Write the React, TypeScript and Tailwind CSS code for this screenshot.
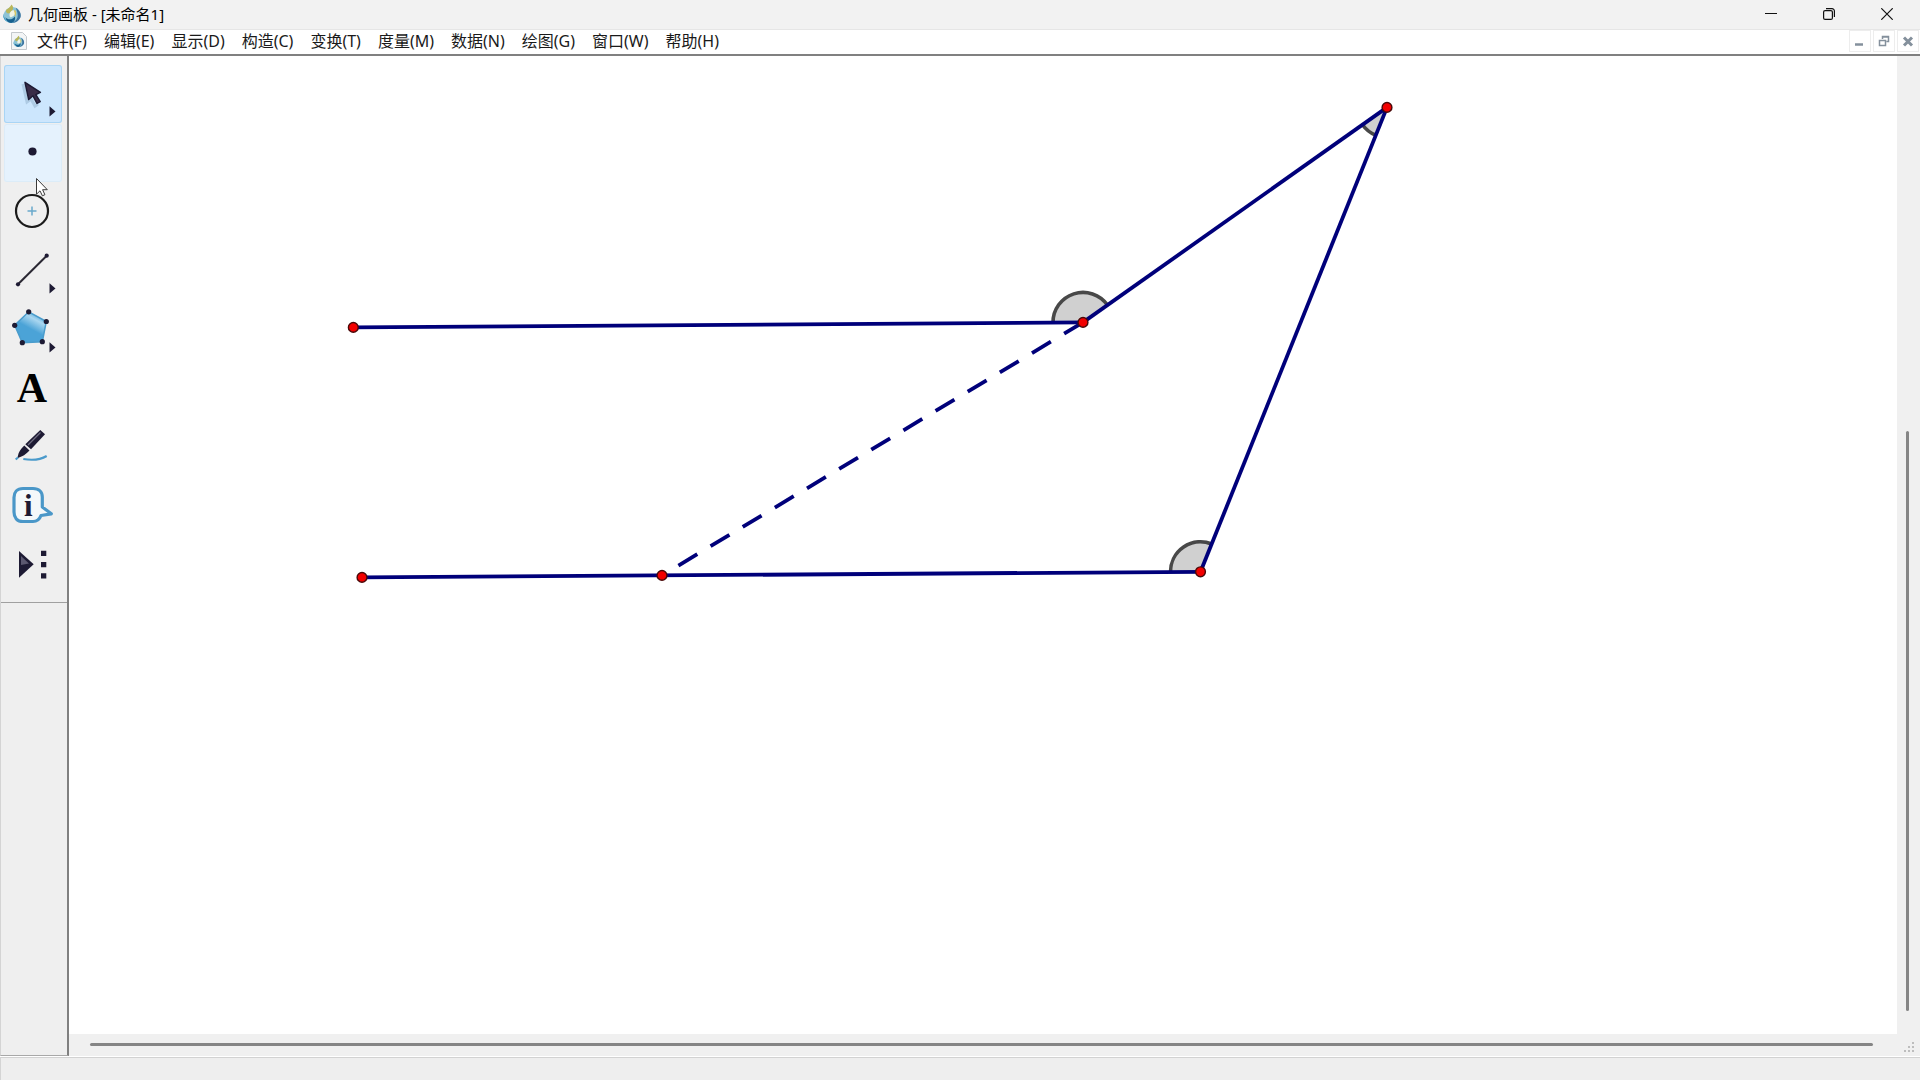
import type { ReactNode } from "react";
import clsx from "clsx";

type Point = { x: number; y: number };

type Tool = {
  name: string;
  icon: ReactNode;
  state?: "selected" | "hover";
  flyout?: boolean;
};

const menus = [
  "文件(F)",
  "编辑(E)",
  "显示(D)",
  "构造(C)",
  "变换(T)",
  "度量(M)",
  "数据(N)",
  "绘图(G)",
  "窗口(W)",
  "帮助(H)",
];

const INK = "#1d1a33";
const NAVY = "#00007a";

// Sketch points, in canvas coordinates
const A: Point = { x: 284.3, y: 271.4 };
const B: Point = { x: 1014, y: 266.4 };
const C: Point = { x: 1318, y: 51.4 };
const D: Point = { x: 1131.5, y: 515.8 };
const E: Point = { x: 293, y: 521.4 };
const F: Point = { x: 593, y: 519.4 };

const segments: [Point, Point][] = [
  [A, B],
  [B, C],
  [C, D],
  [D, E],
];

const angles: { at: Point; from: Point; to: Point }[] = [
  { at: B, from: A, to: C },
  { at: D, from: E, to: C },
  { at: C, from: D, to: B },
];

function towards(from: Point, to: Point, dist: number): Point {
  const len = Math.hypot(to.x - from.x, to.y - from.y);
  return {
    x: from.x + ((to.x - from.x) / len) * dist,
    y: from.y + ((to.y - from.y) / len) * dist,
  };
}

function AngleMark({ at, from, to }: { at: Point; from: Point; to: Point }) {
  const s = towards(at, from, 30);
  const e = towards(at, to, 30);
  const arc = `M${s.x} ${s.y}A30 30 0 0 1 ${e.x} ${e.y}`;
  return (
    <>
      <path d={`${arc}L${at.x} ${at.y}Z`} fill="#d0d0d0" />
      <path d={arc} fill="none" stroke="#484848" strokeWidth="3.6" />
    </>
  );
}

function Drop() {
  return (
    <>
      <path d="M10 3C5 4 1 8 1 13c1 4 4 7 9 7 5 0 9-4 9-8 0-4-2-7-5-8Z" fill="#8cc3d6" />
      <path d="M9.5 0.5c2 2 2 4 1 6L7 10C4 10 3 8 4 6c2-1 4-3 5.5-5.5Z" fill="#b9b65a" />
      <path d="M14 4c4 3 6 6 5 10-2 4-5 6-9 6 4-2 6-5 6-8 0-3-1-5-2-8Z" fill="#3d74a0" />
      <path d="M3 14c3 3 7 3 10-1 1 4-1 6-4 7-3 0-5-2-6-6Z" fill="#17618f" />
      <path d="M1 10c0 4 2 7 5 9-3-1-6-4-5-9Z" fill="#1f8cc4" />
      <path d="M8 9c2-3 4-3 5-1 1 3-1 5-4 6-2 0-2-3-1-5Z" fill="#f2f3e4" />
      <path d="M13 6c2 2 2 5 0 8 0-3 0-5-1-7Z" fill="#d8c565" />
    </>
  );
}

const tools: Tool[] = [
  {
    name: "移动箭头工具",
    state: "selected",
    flyout: true,
    icon: (
      <>
        <path d="M19 19l4 18 4-3 4 7 3-2" fill="none" stroke="#8fb0cc" strokeWidth="3" opacity="0.5" />
        <path
          d="M21 17.3l3.7 17.2 4.3-3.7 4 7.6 3.2-1.7-4.4-7 4.6-2.4Z"
          fill="#3a2c48"
          stroke={INK}
          strokeWidth="1.5"
          strokeLinejoin="round"
        />
      </>
    ),
  },
  {
    name: "点工具",
    state: "hover",
    icon: <circle cx="28.5" cy="27.5" r="4.1" fill={INK} />,
  },
  {
    name: "圆工具",
    icon: (
      <>
        <circle cx="28" cy="28" r="16" fill="none" stroke="#1b1b1b" strokeWidth="2.2" />
        <path d="M23.5 28h9M28 23.5v9" stroke="#6aa9cc" strokeWidth="1.5" />
      </>
    ),
  },
  {
    name: "线段直尺工具",
    flyout: true,
    icon: (
      <>
        <path d="M14 42.3L42.7 13.7" stroke="#2a2833" strokeWidth="2" />
        <circle cx="14" cy="42.3" r="2.1" fill={INK} />
        <circle cx="42.7" cy="13.7" r="2.1" fill={INK} />
      </>
    ),
  },
  {
    name: "多边形工具",
    flyout: true,
    icon: (
      <>
        <defs>
          <linearGradient id="poly" x1="0.75" y1="0.1" x2="0.5" y2="0.55">
            <stop offset="0" stopColor="#5fb0dd" />
            <stop offset="0.35" stopColor="#a9d6f0" />
            <stop offset="1" stopColor="#4ba3d7" />
          </linearGradient>
        </defs>
        <path
          d="M24.7 10.8L42.3 20.5L38.3 40.7L18.3 41.7L10.7 24.3Z"
          fill="url(#poly)"
          stroke="#4a9ccc"
          strokeWidth="1.5"
        />
        {[
          [24.7, 10.8],
          [42.3, 20.5],
          [38.3, 40.7],
          [18.3, 41.7],
          [10.7, 24.3],
        ].map(([x, y]) => (
          <circle key={x} cx={x} cy={y} r="2.6" fill={INK} />
        ))}
      </>
    ),
  },
  {
    name: "文本工具",
    icon: (
      <text x="28" y="42" textAnchor="middle" fontSize="42" fontWeight="700" fontFamily="Liberation Serif, serif">
        A
      </text>
    ),
  },
  {
    name: "标记工具",
    icon: (
      <>
        <path d="M36.3 11L41 15.3L27 30.3L21.3 25.3Z" fill={INK} />
        <path d="M36.5 13.5L24 26" stroke="#6f6c80" strokeWidth="1.3" />
        <path d="M20.3 26.6L25.5 31.5C23 34 21 36 18 37.3L13.3 39.3L14.6 34.3C16 31 18 29 20.3 26.6Z" fill={INK} />
        <path
          d="M11.7 40.5L14 38.5M19.3 40C28 41.5 36 41 42.7 37"
          fill="none"
          stroke="#4a9acb"
          strokeWidth="2.2"
        />
      </>
    ),
  },
  {
    name: "信息工具",
    icon: (
      <>
        <path
          d="M19 10.5H29C35 10.5 38.3 14 38.3 19V29L47.3 35.8L37 37.5C35.5 41.5 33 43.5 29 43.5H19C13 43.5 10 39.5 10 34V19.5C10 14.5 13 10.5 19 10.5Z"
          fill="#f4f8fa"
          stroke="#4a97c8"
          strokeWidth="3.2"
          strokeLinejoin="round"
        />
        <text
          x="24.3"
          y="37.5"
          textAnchor="middle"
          fontSize="31"
          fontWeight="700"
          fill={INK}
          fontFamily="Liberation Serif, serif"
        >
          i
        </text>
      </>
    ),
  },
  {
    name: "自定义工具",
    icon: (
      <>
        <path d="M15 14L29.7 27.3L15 40.7Z" fill={INK} />
        <path d="M17 19L25 26.5L17 28Z" fill="#5b5870" />
        <path d="M37 13.7h5.3v5.3h-5.3zM37 25h5.3v5.3h-5.3zM37 36.3h5.3v5.3h-5.3z" fill={INK} />
      </>
    ),
  },
];

function TitleBar() {
  return (
    <header className="flex h-[29px] shrink-0 items-start bg-[#f2f2f2] pr-1 pl-[2px]">
      <svg viewBox="0 0 20 21" className="mt-1 h-5 w-5" aria-hidden="true">
        <Drop />
      </svg>
      <h1 className="ml-1.5 flex-1 text-[15px] leading-7">几何画板 - [未命名1]</h1>
      <button aria-label="最小化" className="flex h-7 w-[58px] items-center justify-center">
        <svg viewBox="0 0 12 12" className="h-3 w-3" stroke="#111">
          <path d="M0 5.5h12" />
        </svg>
      </button>
      <button aria-label="还原" className="flex h-7 w-[58px] items-center justify-center">
        <svg viewBox="0 0 12 12" className="h-3 w-3" fill="none" stroke="#111" strokeWidth="1.2">
          <rect x="0.6" y="2.6" width="8.8" height="8.8" rx="1.5" />
          <path d="M3 0.7h6a2.4 2.4 0 0 1 2.4 2.4V9" />
        </svg>
      </button>
      <button aria-label="关闭" className="flex h-7 w-[58px] items-center justify-center">
        <svg viewBox="0 0 12 12" className="h-3 w-3" stroke="#111" strokeWidth="1.2">
          <path d="M0.3 0.3L11.7 11.7M11.7 0.3L0.3 11.7" />
        </svg>
      </button>
    </header>
  );
}

function MdiButton({ label, children }: { label: string; children: ReactNode }) {
  return (
    <button aria-label={label} className="flex h-[22px] w-[22px] items-center justify-center border border-[#ededed]">
      <svg viewBox="0 0 12 12" className="h-3 w-3" fill="none" stroke="#84909c">
        {children}
      </svg>
    </button>
  );
}

function MenuBar() {
  return (
    <nav className="flex h-[27px] shrink-0 items-start border-t border-b-2 border-t-[#e6e6e6] border-b-[#808080] bg-white pr-px pl-[10px]">
      <svg viewBox="0 0 18 20" className="mt-px h-5 w-[18px]" aria-hidden="true">
        <path d="M1.5 1.5h11l4 4v13h-15Z" fill="#f3f5f6" stroke="#c3c8cc" />
        <g transform="translate(3 4.5) scale(0.58)">
          <Drop />
        </g>
      </svg>
      <div className="flex flex-1 gap-px pl-px">
        {menus.map((menu) => (
          <button key={menu} className="px-2 text-base leading-[22px] whitespace-nowrap text-[#1a1a1a]">
            {menu}
          </button>
        ))}
      </div>
      <div className="flex gap-0.5">
        <MdiButton label="最小化文档">
          <path d="M1 9.5h8" strokeWidth="2.5" />
        </MdiButton>
        <MdiButton label="还原文档">
          <path d="M1.5 5.5h6v5h-6zM1 5.5h7M4.5 4V1.5h6v5H8.5M4 2h7" strokeWidth="1.5" />
        </MdiButton>
        <MdiButton label="关闭文档">
          <path d="M2 2.5l8 8M10 2.5l-8 8" strokeWidth="3" />
        </MdiButton>
      </div>
    </nav>
  );
}

function Toolbox() {
  return (
    <aside className="relative flex w-[69px] shrink-0 flex-col border-r-2 border-b border-l border-r-[#808080] border-b-[#a8a8a8] border-l-[#d4d4d4] bg-[#efefef]">
      <div className="flex flex-col gap-px border-b border-[#a0a0a0] pt-[9px] pb-[7px] pl-[3px]">
        {tools.map(({ name, icon, state, flyout }) => (
          <button
            key={name}
            aria-label={name}
            className={clsx(
              "h-[58px] w-[58px] rounded-[3px]",
              state === "selected" && "bg-[#cce6fd] ring-1 ring-[#a9d5f5] ring-inset",
              state === "hover" && "bg-[#e5f2fd] ring-1 ring-[#dcecf8] ring-inset"
            )}
          >
            <svg viewBox="0 0 58 58" className="h-full w-full">
              {icon}
              {flyout && <path d="M45.5 41.3L51.5 46.5L45.5 51.5Z" fill={INK} />}
            </svg>
          </button>
        ))}
      </div>
      {/* Mouse pointer */}
      <svg viewBox="0 0 14 20" className="pointer-events-none absolute top-[121px] left-[34px] h-5 w-[14px]">
        <path
          d="M1.5 1.5v15.7l3.5-3.4 2.4 5 2.5-1.1-2.3-5h4.7Z"
          fill="#fff"
          stroke="#3a3a3a"
          strokeLinejoin="round"
        />
      </svg>
    </aside>
  );
}

function Sketch() {
  return (
    <svg className="h-full w-full" role="img" aria-label="未命名1">
      {angles.map((angle) => (
        <AngleMark key={angle.at.x} {...angle} />
      ))}
      <g stroke={NAVY} strokeWidth="3.8">
        {segments.map(([p, q]) => (
          <line key={p.x} x1={p.x} y1={p.y} x2={q.x} y2={q.y} />
        ))}
        <line x1={B.x} y1={B.y} x2={F.x} y2={F.y} strokeDasharray="22 15.5" />
      </g>
      {[A, B, C, D, E, F].map(({ x, y }) => (
        <circle key={x} cx={x} cy={y} r="4.9" fill="#f20000" stroke="#4a0808" strokeWidth="1.4" />
      ))}
    </svg>
  );
}

function Workspace() {
  return (
    <main className="flex min-w-0 flex-1 flex-col bg-[#f0f0f0]">
      <div className="flex min-h-0 flex-1">
        <div className="min-w-0 flex-1 overflow-hidden bg-white">
          <Sketch />
        </div>
        <div className="flex w-[23px] flex-col pt-[375px] pb-[23px] pl-[9px]">
          <div className="w-[3px] flex-1 rounded-full bg-[#858585]" />
        </div>
      </div>
      <div className="flex h-[22px] shrink-0 items-start">
        <div className="mt-[9px] mr-[30px] ml-[21px] h-[3px] flex-1 rounded-full bg-[#858585]" />
        <svg viewBox="0 0 12 12" className="mt-[7px] mr-[5px] h-3 w-3" fill="#bdbdbd" aria-hidden="true">
          <path d="M9 1h2v2H9zM5 5h2v2H5zM9 5h2v2H9zM1 9h2v2H1zM5 9h2v2H5zM9 9h2v2H9z" />
        </svg>
      </div>
    </main>
  );
}

export default function App() {
  return (
    <div className="flex h-screen flex-col overflow-hidden bg-white font-['Noto_Sans','Noto_Sans_CJK_SC',sans-serif] text-black">
      <TitleBar />
      <MenuBar />
      <div className="flex min-h-0 flex-1">
        <Toolbox />
        <Workspace />
      </div>
      <footer className="mt-px h-[23px] shrink-0 border-t border-l border-t-[#d2d2d2] border-l-[#d4d4d4] bg-[#eeeeee]" />
    </div>
  );
}
